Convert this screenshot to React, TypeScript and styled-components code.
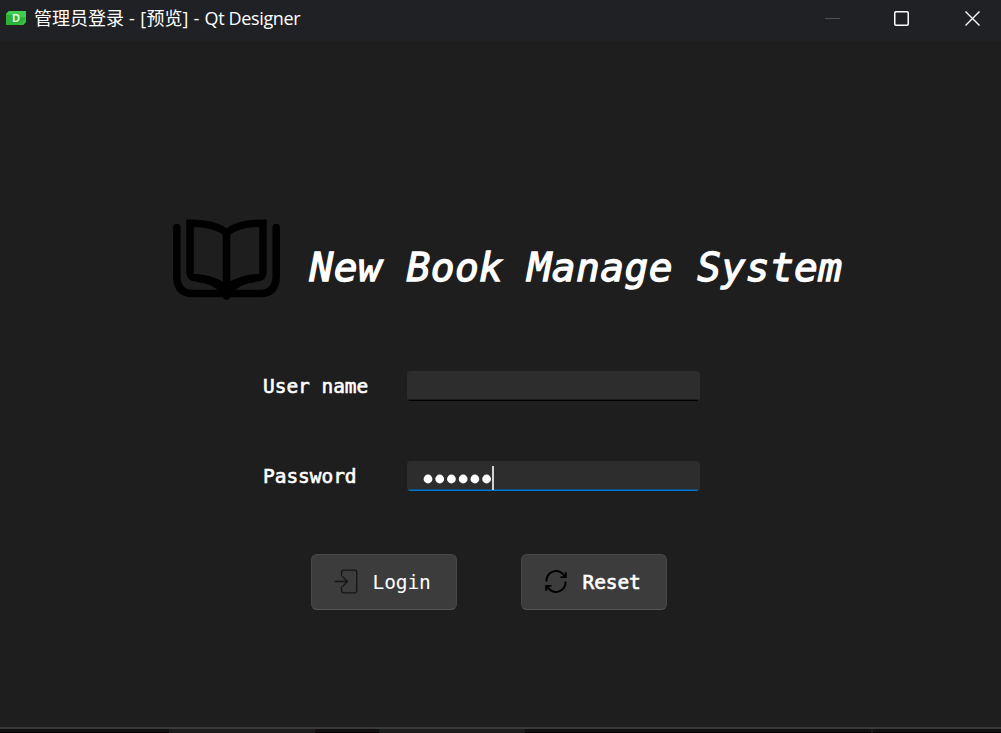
import React from "react";
import styled, { createGlobalStyle } from "styled-components";

const GlobalStyle = createGlobalStyle`
  * { box-sizing: border-box; }
  body { margin: 0; background: #1e1e1e; overflow: hidden; }
`;

const Window = styled.div`
  width: 1001px;
  height: 733px;
  display: flex;
  flex-direction: column;
  background: #1e1e1e;
  color: #fff;
  font-family: "DejaVu Sans Mono", monospace;
`;

const TitleBar = styled.header`
  height: 41px;
  flex: none;
  display: flex;
  align-items: flex-start;
  background: #1f2125;
`;

const AppIcon = styled.svg`
  margin: 11px 0 0 6px;
  width: 20px;
  height: 14px;
`;

const Title = styled.div`
  display: flex;
  margin-left: 8px;
  height: 37px;
  line-height: 37px;
  font-family: "Open Sans", "Noto Sans CJK SC", sans-serif;
  font-size: 18px;
  white-space: pre;
`;

const TitlePart = styled.span<{ $spacing?: number }>`
  letter-spacing: ${(p) => p.$spacing ?? 0}px;
`;

const Controls = styled.svg`
  width: 176px;
  height: 37px;
  margin-left: auto;
`;

const Content = styled.main`
  flex: 1;
  display: flex;
  flex-direction: column;
`;

const Brand = styled.div`
  display: flex;
  margin: 177px 0 0 172px;
  height: 84px;
`;

const BookIcon = styled.svg`
  width: 109px;
  height: 84px;
  flex: none;
`;

const Heading = styled.h1`
  margin: 25px 0 0 28.5px;
  font-size: 39.5px;
  line-height: 48px;
  font-weight: 400;
  font-style: italic;
  letter-spacing: 0.45px;
  white-space: pre;
  -webkit-text-stroke: 1.3px #fff;
`;

const Form = styled.form`
  display: flex;
  flex-direction: column;
  gap: 60px;
  margin: 69px 0 0 263px;
`;

const Row = styled.label`
  display: grid;
  grid-template: 30px / 144px 293px;
  line-height: 32px;
`;

const Label = styled.span`
  font-size: 19.5px;
  letter-spacing: -0.05px;
  white-space: pre;
  -webkit-text-stroke: 0.6px #fff;
`;

const Field = styled.span<{ $focused?: boolean }>`
  display: flex;
  align-items: flex-start;
  padding: 5px 0 0 16px;
  border-radius: 4px;
  background: linear-gradient(
      ${(p) => (p.$focused ? "#0f4f80 50%, #0078d4 50%" : "#1c1c1c 50%, #000 50%")}
    ) 1px 100% / 290px 2px no-repeat, #2d2d2d;
`;

const Dots = styled.svg`
  width: 69px;
  height: 24px;
`;

const Caret = styled.span`
  width: 2px;
  height: 24px;
  background: #d2d2d2;
`;

const Actions = styled.div`
  display: flex;
  gap: 64.5px;
  margin: 63px 0 0 311px;
`;

const Button = styled.button<{ $strong?: boolean }>`
  display: flex;
  align-items: center;
  width: 145.5px;
  height: 55.5px;
  padding: 2px 0 0 21px;
  border: 1px solid #484848;
  border-bottom-color: #555;
  border-radius: 6px;
  background: #3c3c3c;
  color: #fff;
  font: 19.5px/26px "DejaVu Sans Mono", monospace;
  letter-spacing: -0.1px;
  -webkit-text-stroke: ${(p) => (p.$strong ? 0.6 : 0)}px #fff;
`;

const ButtonIcon = styled.svg`
  width: 28px;
  height: 28px;
  margin: -4px 11.5px 0 0;
  flex: none;
`;

const BottomEdge = styled.footer`
  height: 6px;
  flex: none;
  display: grid;
  grid-template-columns: 169px 146px 64px 146px 346px 2px 1fr;
  border-top: 2px solid #393939;
`;

const EdgePart = styled.span<{ $raised?: boolean }>`
  background: ${(p) => (p.$raised ? "#1c1c1c" : "linear-gradient(#101010 75%, #080003 75%)")};
`;

export default function App() {
  return (
    <Window>
      <GlobalStyle />
      <TitleBar>
        <AppIcon viewBox="0 0 20 14">
          <path d="M3 0H20V11L17 14H0V3Z" fill="#2ab336" />
          <path d="M3 0H20V7L0 3Z" fill="#41cd52" />
          <path d="M20 7V11L17 14H12Z" fill="#36bf45" />
          <text x="6.3" y="10.8" fill="#e3ffe6" fontFamily="Liberation Sans" fontWeight="700" fontSize="10.5">D</text>
        </AppIcon>
        <Title>
          <TitlePart>管理员登录</TitlePart>
          <TitlePart $spacing={0.35}> - [</TitlePart>
          <TitlePart>预览</TitlePart>
          <TitlePart $spacing={0.25}>] - </TitlePart>
          <TitlePart $spacing={-0.35}>Qt Designer</TitlePart>
        </Title>
        <Controls viewBox="0 0 176 37" fill="none">
          <path d="M0 18.5H15" stroke="#505154" />
          <rect x="69.75" y="11.75" width="13.5" height="13.5" rx="1.2" stroke="#fff" strokeWidth="1.5" />
          <path d="M140.5 11.5L154.5 25.5M154.5 11.5L140.5 25.5" stroke="#fff" strokeWidth="1.4" />
        </Controls>
      </TitleBar>
      <Content>
        <Brand>
          <BookIcon viewBox="0 0 109 84" fill="none" stroke="#000" strokeWidth="7.5">
            <path d="M4.8 9.5V58Q4.8 75.5 21 75.5H88Q104.2 75.5 104.2 58V9.5" strokeLinecap="round" />
            <path d="M54.5 14.5C46 8 34 4.8 18 5.2V54C18 59 20.5 59.5 24 59.8C36 60.5 47 65 54.5 70C62 65 73 60.5 85 59.8C88.5 59.5 91 59 91 54V5.2C75 4.8 63 8 54.5 14.5Z" />
            <path d="M54.5 14V78" strokeLinecap="round" />
            <path d="M26 60.5C38 61.5 47 66 54.5 75C62 66 71 61.5 83 60.5" />
          </BookIcon>
          <Heading>New Book Manage System</Heading>
        </Brand>
        <Form>
          <Row>
            <Label>User name</Label>
            <Field />
          </Row>
          <Row>
            <Label>Password</Label>
            <Field $focused>
              <Dots viewBox="0 0 69 24" fill="#fff">
                {[0, 1, 2, 3, 4, 5].map((i) => (
                  <circle key={i} cx={5 + i * 11.72} cy={13} r={4.4} />
                ))}
              </Dots>
              <Caret />
            </Field>
          </Row>
        </Form>
        <Actions>
          <Button type="button">
            <ButtonIcon viewBox="0 0 28 28" fill="none" stroke="#151515" strokeWidth="1.3">
              <path d="M8.5 9.5V5.5Q8.5 3.2 10.8 3.2H21.5Q23.8 3.2 23.8 5.5V23.5Q23.8 25.8 21.5 25.8H10.8Q8.5 25.8 8.5 23.5V19.5" />
              <path d="M1.5 14.5H14.5M9.5 9.5L14.5 14.5L9.5 19.5" />
            </ButtonIcon>
            Login
          </Button>
          <Button type="button" $strong>
            <ButtonIcon viewBox="0 0 28 28" fill="none" stroke="#000" strokeWidth="1.9">
              <path d="M3.4 14.5A9.7 9.7 0 0 1 21.8 9.5M22.6 14.5A9.7 9.7 0 0 1 4.2 19.5" />
              <path d="M22.8 5.3V10.1H17.5M3.2 23.8V18.9H8.5" />
            </ButtonIcon>
            Reset
          </Button>
        </Actions>
      </Content>
      <BottomEdge>
        <EdgePart />
        <EdgePart $raised />
        <EdgePart />
        <EdgePart $raised />
        <EdgePart />
        <EdgePart $raised />
        <EdgePart />
      </BottomEdge>
    </Window>
  );
}
